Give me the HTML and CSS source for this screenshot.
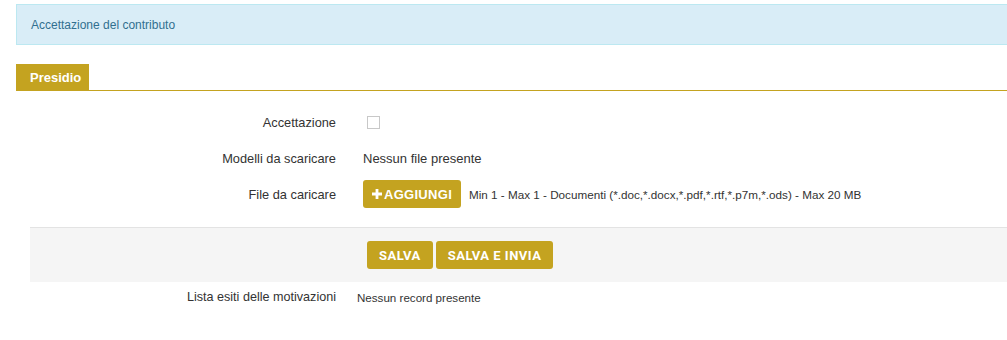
FILE: index.html
```html
<!DOCTYPE html>
<html lang="it">
  <head>
    <meta charset="UTF-8" />
    <meta name="viewport" content="width=device-width, initial-scale=1.0" />
    <title>Accettazione del contributo</title>
    <link rel="stylesheet" href="styles.css">
  </head>
  <body>
    <div class="page">
      <div class="alert-info">Accettazione del contributo</div>

      <div class="tabs">
        <div class="tab active">Presidio</div>
      </div>

      <div class="form">
        <div class="form-row">
          <label class="form-label">Accettazione</label>
          <div class="form-value">
            <input type="checkbox" class="check" />
          </div>
        </div>
        <div class="form-row">
          <label class="form-label">Modelli da scaricare</label>
          <div class="form-value">Nessun file presente</div>
        </div>
        <div class="form-row">
          <label class="form-label">File da caricare</label>
          <div class="form-value">
            <button class="btn btn-add">
              <svg class="plus" viewBox="0 0 10 10" width="10" height="10">
                <path d="M3.6 0h2.8v3.6H10v2.8H6.4V10H3.6V6.4H0V3.6h3.6z" fill="#fff" />
              </svg>AGGIUNGI
            </button>
            <span class="hint">Min 1 - Max 1 - Documenti (*.doc,*.docx,*.pdf,*.rtf,*.p7m,*.ods) - Max 20 MB</span>
          </div>
        </div>

        <div class="actions">
          <button class="btn btn-main">SALVA</button>
          <button class="btn btn-main">SALVA E INVIA</button>
        </div>

        <div class="form-row small">
          <label class="form-label">Lista esiti delle motivazioni</label>
          <div class="form-value narrow">Nessun record presente</div>
        </div>
      </div>
    </div>
  </body>
</html>
```

FILE: styles.css
```css
* {
  box-sizing: border-box;
}
body {
  margin: 0;
  background-color: #fff;
  font-family: "Liberation Sans", Arial, sans-serif;
  font-size: 13px;
  color: #333;
  overflow: hidden;
}
.page {
  padding: 4px 0 0 16px;
}
.alert-info {
  height: 41px;
  padding: 0 14px;
  display: flex;
  align-items: center;
  font-size: 12px;
  color: #31708f;
  background-color: #d9edf7;
  border: 1px solid #bce8f1;
  border-right: none;
}
.tabs {
  margin-top: 19px;
  display: flex;
  border-bottom: 1px solid #c4a320;
}
.tab {
  width: 73px;
  height: 26px;
  padding-left: 14px;
  display: flex;
  align-items: center;
  font-weight: bold;
  color: #fff;
  background-color: #c4a320;
}
.form {
  padding-top: 13px;
}
.form-row {
  display: flex;
  align-items: center;
  height: 36px;
}
.form-label {
  width: 320px;
  text-align: right;
  font-size: 12.8px;
  color: #333;
}
.form-value {
  margin-left: 27px;
  display: flex;
  align-items: center;
  color: #333;
}
.check {
  width: 13px;
  height: 13px;
  margin: 0 0 0 4px;
  appearance: none;
  border: 1px solid #c8c8c8;
  background-color: #fff;
}
.btn {
  border: none;
  border-radius: 3px;
  cursor: pointer;
  color: #fff;
  background-color: #c4a320;
}
.btn-add {
  height: 28px;
  width: 98px;
  padding: 0;
  display: flex;
  align-items: center;
  justify-content: center;
  font-family: "Liberation Sans", Arial, sans-serif;
  font-size: 13px;
  font-weight: bold;
  letter-spacing: 0.3px;
}
.plus {
  margin-right: 2px;
}
.hint {
  margin-left: 8px;
  font-size: 11.7px;
}
.actions {
  margin: 15px 0 0 14px;
  padding: 13px 0 13px 337px;
  display: flex;
  gap: 3px;
  background-color: #f5f5f5;
  border-top: 1px solid #e3e3e3;
}
.btn-main {
  height: 28px;
  padding: 0 12px;
  font-family: Roboto, "Liberation Sans", sans-serif;
  font-size: 13px;
  font-weight: bold;
  letter-spacing: 0.5px;
}
.form-row.small {
  height: 30px;
}
.form-row.small .form-label {
  font-size: 12.6px;
}
.form-value.narrow {
  margin-left: 21px;
  font-size: 11.6px;
}
```
